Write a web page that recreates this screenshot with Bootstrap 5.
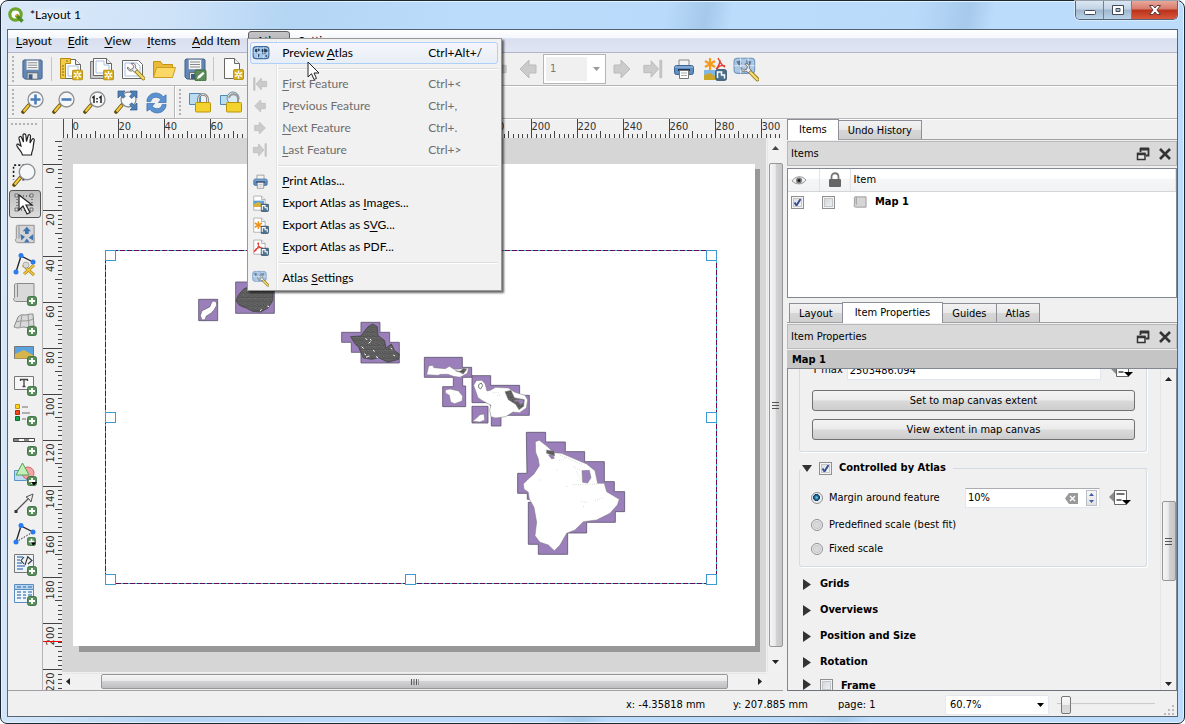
<!DOCTYPE html>
<html lang="en">
<head>
<meta charset="utf-8">
<meta name="viewport" content="width=device-width, initial-scale=1">
<title>*Layout 1</title>
<link rel="stylesheet" href="https://cdn.jsdelivr.net/npm/bootstrap@5.3.0/dist/css/bootstrap.min.css">
<style>
:root{--ui:"DejaVu Sans Condensed","DejaVu Sans",sans-serif;--menu:Lato,"Open Sans",sans-serif}
body{font:11px/14px var(--ui);color:#000;background:#fff}
button,input,select{font:inherit;color:inherit}
svg{display:block;flex:none}
.win{border:1px solid #1c2733;border-radius:8px 8px 7px 7px;background:linear-gradient(100deg,#d9e8f8 0,#cfe3f8 13%,#b4d5f4 22%,#bcdcfb 36%,#b9dafa 51%,#a5c9ea 54%,#bcdcfb 56%,#badafa 70%,#a6caec 74%,#bcdcfb 76%,#bddcfb 100%);padding:0 6px 6px;box-shadow:inset 0 0 0 1px #e3f2ff}
.titlebar{height:28px;font:12px/16px var(--menu);padding:0 0 0 1px}
.halo{background:radial-gradient(closest-side,#fff9,#fff0);padding:0 6px}
.winbtns{border:1px solid #55667a;border-top:0;border-radius:0 0 5px 5px;overflow:hidden;height:19px;box-shadow:0 0 0 1px #e9f5ff99}
.winbtns button{border:0;padding:0;width:28px;background:linear-gradient(#dbe7f3 0,#c2d3e5 45%,#9fb6cc 50%,#bcd4ea 100%);border-right:1px solid #6d8095}
.winbtns .closer{width:45px;border-right:0;background:linear-gradient(#e9a99c 0,#d7796a 45%,#b8301a 50%,#d9583c 100%)}
.client{border:1px solid #596673;border-top-color:#4f6377;background:#f0f0f0;min-height:0}
.menubar{height:23px;background:linear-gradient(#fff 0,#f5f7fc 35%,#d9dfef 40%,#dfe4f3 90%);border-bottom:1px solid #b2b5c6;font:12px/16px var(--menu)}
.menubar>a,.atlasitem>a{color:#000;text-decoration:none;padding:3px 8px;display:block;white-space:nowrap}
u{text-underline-offset:2px}
.atlasitem>a{background:linear-gradient(#c4c4c6,#a9a9ac);border:1px solid #5e5e62;border-radius:3px 3px 0 0;padding:1px 7px 3px;margin-top:1px}
.tbar{height:33px;border-bottom:1px solid #b5b5b5;background:#f0f0f0}
.tbar+.tbar,main{box-shadow:inset 0 1px 0 #fdfdfd}
.tbar button,.tools button{border:0;background:none;padding:0;display:flex;align-items:center;justify-content:center}
.tbar button{width:31px;height:28px}
.grip{width:3px;height:26px;background:radial-gradient(circle at 1px 1px,#b3b3b3 1px,#fff0 1px) 0 0/3px 4px;margin:0 2px 0 4px}
.griph{width:28px;height:3px;background:radial-gradient(circle at 1px 1px,#b3b3b3 1px,#fff0 1px) 0 0/4px 3px;margin:4px 0 3px}
.vsep{width:1px;height:24px;background:#c6c6c6;margin:0 3px}
.grpA{width:473px}
.grpZ{width:167px;border-right:1px solid #b5b5b5;box-shadow:1px 0 0 #fff}
.pagecombo{width:63px;height:30px;border:1px solid #b5b5b5;background:#fff;padding:2px}
.pagecombo select{appearance:none;border:0;width:57px;height:24px;color:#777;padding:0 4px;opacity:1;background:url("data:image/svg+xml,%3Csvg xmlns='http://www.w3.org/2000/svg' width='7' height='4'%3E%3Cpath d='M0 0h7L3.500 4z' fill='%23999'/%3E%3C/svg%3E") no-repeat right 3px center,linear-gradient(90deg,#f0f0f0 41px,#fff 41px)}
.tools{width:35px;border-right:1px solid #b5b5b5;border-bottom:1px solid #a0a0a4;padding-right:1px}
.tools button{width:32px;height:30px;flex:none}
.tools .on{border:1px solid #555;border-radius:3px;background:linear-gradient(#bdbdbd,#dcdcdc);height:28px;margin:1px 0}
.stage{display:grid;grid-template-columns:19px minmax(0,1fr) 17px;grid-template-rows:19px minmax(0,1fr) 18px;min-width:0;border-bottom:1px solid #a0a0a4}
.rulertop{grid-column:1/4;overflow:hidden;position:relative}
.rulerleft{grid-row:2/4;overflow:hidden;position:relative}
.rulertop svg,.rulerleft svg,.scene svg{position:absolute;left:0;top:0}
.rulertop svg{width:100%;height:19px}
.rulerleft svg{width:19px;height:100%}
.stage text{font:11px var(--ui);fill:#333}
.scene{background:#d6d6d6;position:relative;overflow:hidden}
.sbv{width:16px;margin-left:1px;background:#f1f1f1;border-left:1px solid #e6e6e6;align-items:center}
.sbh{height:16px;margin-top:1px;background:#f1f1f1;border-top:1px solid #e6e6e6}
.thumb{border:1px solid #979797;border-radius:2px;display:flex;align-items:center;justify-content:center}
.sbv .thumb{width:14px;background:linear-gradient(90deg,#f5f5f5,#e9e9e9 45%,#d2d2d4 50%,#c6c6c9)}
.sbv .tall{margin:13px 0}
.sbh .thumb{background:linear-gradient(#f5f5f5,#e9e9e9 45%,#d2d2d4 50%,#bebec0);margin:0 30px 0 31px}
.dockcol{width:390px}
.tabrow{height:21px;border-bottom:1px solid #a0a0a4}
.tabrow2{margin-top:4px;padding-left:2px}
.tabrow button{border:1px solid #8c8e98;border-bottom:0;border-right-width:0;background:linear-gradient(#f2f2f2 0,#e9e9e9 48%,#d6d6d6 52%,#cfcfcf);height:19px;padding:2px 9px 0;align-self:flex-end;line-height:16px;white-space:nowrap}
.tabrow button:last-child{border-right-width:1px}
.tabrow .active{background:#fff;height:21px;margin-bottom:-1px;padding:0 12px;border-right-width:1px}
.tabrow:first-child .active{padding:0 11px}
.tabrow .active+button{border-left:0}
.dockhead{height:25px;border:1px solid #b9b9b9;background:#d9d9d9;padding:1px 4px 0 3px;margin-top:1px}
.dockhead button{border:0;background:none;padding:0}
.tree{border:1px solid #828790;background:#fff;height:130px;margin-top:2px}
.tree table{width:100%;border-collapse:collapse;table-layout:fixed}
.tree th{height:22px;font-weight:400;background:linear-gradient(#fff 0,#fff 42%,#f5f6f8 46%,#f1f2f4);border-bottom:1px solid #d5d5d5;border-right:1px solid #e2e3e5;padding:1px 3px 0}
.tree td{height:22px;padding:0 3px}
.tree .vis{width:31px}
.ck{appearance:none;width:13px;height:13px;border:1px solid #8e8f8f;background:linear-gradient(135deg,#cdd1d6,#f6f6f6);box-shadow:inset 0 0 0 1px #f4f4f4,inset 0 0 0 2px #c3c7cc;margin:0;display:block;flex:none}
.ck:checked{background:url("data:image/svg+xml,%3Csvg xmlns='http://www.w3.org/2000/svg' viewBox='0 0 11 11'%3E%3Cpath d='M2.500 5.500L4.500 8.500L8.500 2' fill='none' stroke='%23394f8f' stroke-width='2'/%3E%3C/svg%3E") center/11px,linear-gradient(135deg,#d5d9e0,#fafafa)}
.rd{appearance:none;width:12px;height:12px;border:1px solid #8e8f8f;border-radius:50%;background:radial-gradient(circle,#d9d9d9 40%,#fff 60%);box-shadow:inset 0 0 0 1px #f4f4f4,inset 0 0 0 2px #c3c7cc;margin:0 6px 0 0;flex:none}
.rd:checked{background:radial-gradient(circle at 45% 45%,#7fd0f0 0,#1b6a9c 25%,#123a5c 42%,#eee 48%);box-shadow:none}
.itemhead{height:18px;background:#c5c5c5;font-weight:700;line-height:18px;padding:1px 0 0 5px;margin-top:1px}
.props{border:1px solid #828790;border-bottom-color:#6f737c;min-height:0}
.propbody{overflow:hidden;padding:0 12px 0 11px}
.gbox{border:1px solid #d3dce5;border-radius:3px;box-shadow:1px 1px 0 #fff}
.gextent{border-top:0;padding:0 11px 0 12px;margin-top:-9px;height:92px;gap:8px}
.extrow{margin-bottom:2px}
.inp{border:1px solid #e2e6ee;border-top-color:#abadb3;background:#fff;padding:0 2px;height:20px;min-width:0}
.inp input{min-width:0}
.wide{height:21px;border:1px solid #707070;border-radius:3px;background:linear-gradient(#f3f3f3 0,#ebebeb 48%,#dadada 52%,#cdcdcd);padding:0;line-height:17px}
.gtitle{height:16px;gap:7px;position:relative;z-index:1;padding-left:3px}
.gtitle .rule{height:1px;background:#d3dce5}
.gatlas{border-top:0;height:98px;margin-top:-7px;padding:19px 14px 0 11px;display:flex;flex-direction:column;gap:10px}
.fold{height:26px;padding-left:4px;gap:9px}
.folds{margin-top:4px}
.spin{width:135px}
.spinbtns{width:14px;height:16px;border:1px solid #b9bec9;background:linear-gradient(#f6f6f6,#e2e2e2)}
.spinbtns button{border:0;padding:0;background:none;height:7px;display:flex;justify-content:center;align-items:center}
.status{height:25px;padding:2px 2px 0 0}
.status .sx{width:107px}.status .sy{width:105px}.status .sp{width:107px}
.zoomsel{appearance:none;width:104px;height:20px;border:1px solid #e3e9ef;padding:0 4px;border-radius:2px;background:#fff url("data:image/svg+xml,%3Csvg xmlns='http://www.w3.org/2000/svg' width='7' height='4'%3E%3Cpath d='M0 0h7L3.500 4z'/%3E%3C/svg%3E") no-repeat right 4px center}
.zslide{appearance:none;width:98px;height:20px;background:linear-gradient(#b9b9b9,#fff) no-repeat 0 8px/100% 2px;margin:0}
.zslide::-webkit-slider-thumb{appearance:none;width:10px;height:18px;border:1px solid #777;border-radius:2px;background:linear-gradient(#fafafa 0,#eee 50%,#d5d5d5 52%,#ddd)}
.atlasmenu{display:block;position:absolute;top:8px;left:-1px;z-index:1000;width:255px;min-width:0;border:1px solid #979797;border-radius:0;background:linear-gradient(90deg,#f1f1f1 28px,#e2e3e3 28px,#e2e3e3 29px,#fff 29px,#fff 30px,#f1f1f1 30px);padding:3px 3px 1px 2px;box-shadow:2px 2px 2px #0009;font:12px/16px var(--menu);margin:0;color:#000}
.atlasmenu button{display:grid;grid-template-columns:31px 146px 1fr;width:100%;height:22px;align-items:center;border:1px solid #fff0;background:none;padding:0;text-align:left;border-radius:3px;white-space:nowrap}
.atlasmenu svg{margin-left:1px}
.atlasmenu button:disabled{color:#6d6d6d}
.atlasmenu .hot{border-color:#aecff7;background:linear-gradient(#f4f6fa,#e8eef6)}
.atlasmenu hr{margin:4px 0 3px 28px;border:0;height:2px;background:linear-gradient(#dcdcdc 50%,#fff 50%);opacity:1}
.pointer{position:absolute;left:59px;top:31px;z-index:1001}
</style>
</head>
<body>
<svg width="0" height="0" class="position-absolute" aria-hidden="true">
<defs>
<symbol id="floppy" viewBox="0 0 24 24"><path d="M3 2h18l1 1v18l-1 1H4l-2-2V3z" fill="#6387b5" stroke="#41618c"/><path d="M5.500 2.500h13v10h-13z" fill="#f4f6f8" stroke="#7c8a9c" stroke-width=".6"/><path d="M7 5h10M7 7.500h10M7 10h10" stroke="#888"/><path d="M6.500 15.500h11v6.500h-11z" fill="#e4e4e4" stroke="#555" stroke-width=".7"/><path d="M8 17h4v5H8z" fill="#3d5c86"/></symbol>
<symbol id="star" viewBox="0 0 12 12"><rect x=".5" y=".5" width="11" height="11" rx="1.500" fill="#d8ae1e" stroke="#b28d12"/><path d="M6 1.500v9M2 3.700l8 4.600M10 3.700L2 8.300" stroke="#fff" stroke-width="1.500"/><circle cx="6" cy="6" r="1.200" fill="#d8ae1e"/></symbol>
<symbol id="newlay" viewBox="0 0 24 24"><path d="M5.500 2.500h11l5 5v14h-16z" fill="#fff" stroke="#666"/><path d="M16.500 2.500v5h5" fill="#eee" stroke="#666"/><path d="M1.500 1.500h10v5h-5v15h-5z" fill="#f2cb4a" stroke="#b48a12"/><path d="M3 9h2M3 12h2M3 15h2M3 18h2M8 3v2" stroke="#8a6a10"/><path d="M9 9h10v10H9z" fill="none" stroke="#a8c0e0"/><use href="#star" x="13" y="12.500" width="11" height="11"/></symbol>
<symbol id="duplay" viewBox="0 0 24 24"><path d="M.5 4.500h16v17H.5z" fill="#c9c9c9" stroke="#777"/><path d="M3.500 1.500h13l5 5v12h-18z" fill="#fff" stroke="#666"/><path d="M16.500 1.500v5h5" fill="#eee" stroke="#666"/><path d="M6 4h8v4h5v8H6z" fill="none" stroke="#a8c0e0"/><use href="#star" x="13" y="12.500" width="11" height="11"/></symbol>
<symbol id="wrenchhead" viewBox="0 0 24 24"><path d="M12 12l9 9" stroke="#8a7316" stroke-width="4.500" stroke-linecap="round"/><path d="M12.500 12.500L21 21" stroke="#f2d76a" stroke-width="2.800" stroke-linecap="round"/><path d="M3 8c-1 3 3 6 6 4l2 2 3-3-2-2c1-4-2-6-5-5l3 3-1 3-3 1z" fill="#eee" stroke="#555" stroke-width=".9"/></symbol>
<symbol id="manager" viewBox="0 0 24 24"><path d="M1.500 3.500h16l4 4v14h-20z" fill="#fff" stroke="#666"/><path d="M4 6h12l3 3v10H4z" fill="none" stroke="#a8c0e0"/><use href="#wrenchhead" x="4" y="3" width="21" height="21"/></symbol>
<symbol id="folder" viewBox="0 0 24 24"><path d="M1.500 20.500v-16h7l2 3h10v3" fill="#e9b93a" stroke="#c79212"/><path d="M1.500 20.500l3-10h19l-3 10z" fill="#fbd766" stroke="#cf9d1e"/></symbol>
<symbol id="savetpl" viewBox="0 0 24 24"><use href="#floppy"/><rect x="12" y="13" width="11" height="11" rx="1.500" fill="#5c8d58" stroke="#3f6d3d"/><path d="M14 22l1-3 5-4 1.500 1.500-4.500 4.500z" fill="#fff"/></symbol>
<symbol id="addpage" viewBox="0 0 24 24"><path d="M3.500 1.500h10l5 5v15h-15z" fill="#fff" stroke="#666"/><path d="M13.500 1.500v5h5" fill="#eee" stroke="#666"/><use href="#star" x="12" y="12" width="11" height="11"/></symbol>
<symbol id="lens" viewBox="0 0 24 24"><path d="M8 15l-6 7" stroke="#5d4b0c" stroke-width="3.600" stroke-linecap="round"/><path d="M8 15l-5.500 6.500" stroke="#f5c93c" stroke-width="2.200"/><circle cx="14.500" cy="9.500" r="7.500" fill="#f5f7f8" stroke="#8b8f92" stroke-width="1.300"/></symbol>
<symbol id="zin" viewBox="0 0 24 24"><use href="#lens"/><path d="M14.500 4.500v10M9.500 9.500h10" stroke="#4b7db8" stroke-width="2.600"/></symbol>
<symbol id="zout" viewBox="0 0 24 24"><use href="#lens"/><path d="M9.500 9.500h10" stroke="#4b7db8" stroke-width="2.600"/></symbol>
<symbol id="zone" viewBox="0 0 24 24"><use href="#lens"/><path d="M9.300 7.800l1.700-1.300v6.500M16.300 7.800L18 6.500V13" fill="none" stroke="#222" stroke-width="1.500"/><path d="M14 8v1.500M14 11v1.500" stroke="#222" stroke-width="1.500"/></symbol>
<symbol id="zfull" viewBox="0 0 24 24"><use href="#lens"/><path d="M4 1h7L8.800 3.200l2.500 3-2 2-3-2.600L4 8zM23 1v7l-2.400-2.200-3 2.600-2-2 2.600-3L16 1zM23 20h-7l2.200-2.200-2.600-3 2-2 3 2.600L23 13z" fill="#4f7fb7" stroke="#2f5a8c" stroke-width=".7"/></symbol>
<symbol id="refresh" viewBox="0 0 24 24"><path d="M2 11c0-9 12-12 17-5l3-2v8h-8l2.500-3C13 5 7 6 6 11z" fill="#5b92cf" stroke="#356ba8" stroke-width=".7"/><path d="M22 14c0 9-12 12-17 5l-3 2v-8h8l-2.500 3c3.500 4 9.500 3 10.500-2z" fill="#5b92cf" stroke="#356ba8" stroke-width=".7"/></symbol>
<symbol id="padlock" viewBox="0 0 24 24"><path d="M10.500 13V9c0-6 9-6 9 0v4" fill="none" stroke="#777" stroke-width="2.600"/><path d="M10.500 13V9c0-6 9-6 9 0v4" fill="none" stroke="#ddd" stroke-width="1"/><rect x="7.500" y="12.500" width="15" height="9.500" rx="1" fill="#f3d22e" stroke="#b8940c"/></symbol>
<symbol id="lockit" viewBox="0 0 24 24"><path d="M1.500 3.500h11v11h-11z" fill="#b9dcf2" stroke="#4e89b5"/><use href="#padlock"/></symbol>
<symbol id="unlockit" viewBox="0 0 24 24"><path d="M1.500 5.500h14v9h-14z" fill="#b9dcf2" stroke="#4e89b5"/><circle cx="14" cy="8" r="6" fill="#d9ecf6" stroke="#7a8a96"/><path d="M10 8c1-5 8-5 9 0v5" fill="none" stroke="#999" stroke-width="2"/><rect x="7.500" y="12.500" width="15" height="9.500" rx="1" fill="#f3d22e" stroke="#b8940c"/></symbol>
<symbol id="arrl" viewBox="0 0 24 24"><path d="M4 12l9-9v5h7v8h-7v5z" fill="#cbcbcb" stroke="#bababa"/></symbol>
<symbol id="arrr" viewBox="0 0 24 24"><path d="M20 12l-9-9v5H4v8h7v5z" fill="#cbcbcb" stroke="#bababa"/></symbol>
<symbol id="arrfirst" viewBox="0 0 24 24"><path d="M6 12l8-9v5h8v8h-8v5zM2.500 2.500h2v19h-2z" fill="#cbcbcb" stroke="#bababa"/></symbol>
<symbol id="arrlast" viewBox="0 0 24 24"><path d="M18 12l-8-9v5H2v8h8v5zM19.500 2.500h2v19h-2z" fill="#cbcbcb" stroke="#bababa"/></symbol>
<symbol id="printer" viewBox="0 0 24 24"><path d="M7 9V3h10v6" fill="#f3f3f3" stroke="#888"/><rect x="2.500" y="8.500" width="19" height="9" rx="2" fill="#5e8dc0" stroke="#3c6494"/><path d="M3 10h18" stroke="#9dbfe2"/><path d="M6 13h12" stroke="#1f3350" stroke-width="2"/><path d="M7.500 13.500h9v8h-9z" fill="#fff" stroke="#777"/><path d="M9 16h6M9 18.500h6" stroke="#aaa"/></symbol>
<symbol id="disk" viewBox="0 0 12 12"><rect x=".7" y=".7" width="10.600" height="10.600" rx="1.500" fill="#4d7391" stroke="#2f4c63"/><path d="M2.500 9V3h4v3h3v3.500" fill="none" stroke="#fff" stroke-width="1.500"/></symbol>
<symbol id="export" viewBox="0 0 24 24"><path d="M7 1v12M2 4l10 6M12 4L2 10" stroke="#f59a1e" stroke-width="2.200"/><path d="M15 1c2 4 4 8 7 9M14 12c2-4 6-4 8-3M17 3c0 4-2 7-4 9" fill="none" stroke="#e23b30" stroke-width="1.400"/><path d="M1 13h11v10H1z" fill="#7fb6e6" /><path d="M1 18l6-2 5 3v4H1z" fill="#caa62a"/><use href="#disk" x="12" y="12" width="12" height="12"/></symbol>
<symbol id="atlasmap" viewBox="0 0 24 24"><rect x="1.500" y="3.500" width="21" height="16" rx="4" fill="#a5c6e8" stroke="#3f6c9c" stroke-width="1.500"/><path d="M4 7l5-1 2 2-3 2-1 3-3-3zM8 13l2 1-1 4-1-1zM13 7l4-1 4 2-1 3-2 1v2l-2-2-1 3-2-4zM18 15h2v2h-2z" fill="#27405e"/><path d="M7.500 4v15M15.500 4v15M2 11.500h20" stroke="#dbe9f7" stroke-width=".8"/></symbol>
<symbol id="atlasset" viewBox="0 0 24 24"><rect x="1" y="2" width="19" height="14" rx="3" fill="#a9c8e8" stroke="#6f94bb"/><path d="M3 5l4-1 1 3-2 3zM12 4l5 1-1 3-3 1z" fill="#5b7898"/><path d="M7 2v14M14 2v14M1 9h19" stroke="#e5eff9" stroke-width=".8"/><use href="#wrenchhead" x="5" y="4" width="20" height="20"/></symbol>
<symbol id="page" viewBox="0 0 24 24"><path d="M2.500 1.500h11l5 5v15h-16z" fill="#fff" stroke="#999"/><path d="M13.500 1.500v5h5" fill="#eee" stroke="#999"/></symbol>
<symbol id="eximg" viewBox="0 0 24 24"><use href="#page"/><path d="M2 8h15v8H2z" fill="#58a0dc"/><path d="M2 13l7-3 8 4v3H2z" fill="#d6b23c"/><use href="#disk" x="12" y="12" width="12" height="12"/></symbol>
<symbol id="exsvg" viewBox="0 0 24 24"><use href="#page"/><path d="M9 6v11M4 8.500l10 6M14 8.500l-10 6" stroke="#f0931a" stroke-width="2.200"/><use href="#disk" x="12" y="12" width="12" height="12"/></symbol>
<symbol id="expdf" viewBox="0 0 24 24"><use href="#page"/><path d="M8 5c1 5 3 8 8 9M3 18c3-6 8-7 12-5M9 5c1 5-2 10-6 13" fill="none" stroke="#dd3a2e" stroke-width="1.600"/><use href="#disk" x="12" y="12" width="12" height="12"/></symbol>
<symbol id="hand" viewBox="0 0 24 24"><path d="M9.500 23c-1-4-3.500-5-5.500-9-.8-2 1-2.600 2.300-1L8 14 6 6.500c-.5-2.300 2-2.800 2.700-.8L10.500 10 10 3.500c0-2.300 2.600-2.300 2.900 0l.6 6L15 4c.5-2 2.800-1.600 2.500.6L17 11l2-3.500c1-1.500 2.600-.8 2.200 1-.9 4-.8 5.500-1.300 8.500-.4 2-1.400 3-1.400 6z" fill="#fff" stroke="#222" stroke-width="1.200"/></symbol>
<symbol id="zrect" viewBox="0 0 24 24"><path d="M12 3H1.500v14M12 17H4" fill="none" stroke="#222" stroke-width="1.500" stroke-dasharray="2 2"/><use href="#lens"/></symbol>
<symbol id="select" viewBox="0 0 24 24"><path d="M4 4h15v14H4z" fill="none" stroke="#333" stroke-dasharray="1 2"/><path d="M2 2h3v3H2zM17 2h3v3h-3zM2 16h3v3H2zM17 16h3v3h-3z" fill="#ddd" stroke="#555" stroke-width=".8"/><path d="M6 3v15l4-4 4 8 3-1.500-4-7.500h6z" fill="#fff" stroke="#222" stroke-width="1.200"/></symbol>
<symbol id="movec" viewBox="0 0 24 24"><path d="M5 2.500h17v19H5c-4 0-4-4-2.500-4.500V4c0-2 2.500-2 3 0v13" fill="#d5d5d5" stroke="#8a8a8a"/><path d="M14 4l4.500 5H16v3h-4V9H9.500zM7 12l5 3-4 4zM21 12v7l-5-3zM11 21l3-4 3 4z" fill="#3f74b0"/></symbol>
<symbol id="nodes" viewBox="0 0 24 24"><path d="M3 20L8 4l12 6" fill="none" stroke="#222" stroke-width="1.300"/><path d="M10 13l11 10M21 13L11 22" stroke="#a9820c" stroke-width="3"/><path d="M10 13l11 10M21 13L11 22" stroke="#f3cc4a" stroke-width="1.600"/><circle cx="13" cy="13" r="3" fill="#d9d9d9" stroke="#888" stroke-width=".6"/><circle cx="3" cy="20" r="2.500" fill="#2a7af0"/><circle cx="8" cy="3.500" r="2.500" fill="#2a7af0"/><circle cx="20" cy="10" r="2.500" fill="#2a7af0"/></symbol>
<symbol id="plus" viewBox="0 0 10 10"><rect x=".5" y=".5" width="9" height="9" rx="2" fill="#5a8f5c" stroke="#44744a"/><path d="M5 2v6M2 5h6" stroke="#fff" stroke-width="1.800"/></symbol>
<symbol id="plusd" viewBox="0 0 10 10"><use href="#plus"/><path d="M4 6h6L7 9.500z"/></symbol>
<symbol id="amap" viewBox="0 0 24 24"><path d="M4 1.500h17v18H4c-4 0-4-3-2.500-4V3c0-2 2.500-2 3 0v12" fill="#d9d9d9" stroke="#8a8a8a"/><use href="#plus" x="14" y="14" width="10" height="10"/></symbol>
<symbol id="a3d" viewBox="0 0 24 24"><path d="M1 15L5 5c3-3 5-2 8-2 3-1 5-1 7-1l1 12c-4-1-5 3-10 1-3 0-6 2-10 0z" fill="#d9d9d9" stroke="#8a8a8a"/><path d="M3 10c5-2 12 0 17-3M9 3L7 15M15 2l1 13" fill="none" stroke="#999"/><use href="#plus" x="14" y="14" width="10" height="10"/></symbol>
<symbol id="apic" viewBox="0 0 24 24"><path d="M1.500 4.500h19v12h-19z" fill="#5aa3e0" stroke="#777"/><path d="M2 12l9-4 9 5v3.500H2z" fill="#d6b64c"/><use href="#plus" x="14" y="14" width="10" height="10"/></symbol>
<symbol id="alab" viewBox="0 0 24 24"><path d="M1.500 4.500h19v13h-19z" fill="#f7f7f7" stroke="#777"/><path d="M7.500 9V7.500h7V9M11 7.500v7M9.500 14.500h3" fill="none" stroke="#444" stroke-width="1.300"/><use href="#plus" x="14" y="14" width="10" height="10"/></symbol>
<symbol id="aleg" viewBox="0 0 24 24"><path d="M2.500 2.500h4v4h-4z" fill="#ffd21c" stroke="#c79212"/><path d="M2.500 8.500h4v4h-4z" fill="#f0481c" stroke="#a82d0c"/><path d="M2.500 14.500h4v4h-4z" fill="#17a34a" stroke="#0d6b30"/><path d="M9 5h6M9 11h8M9 17h4" stroke="#999" stroke-width="1.600"/><use href="#plus" x="14" y="14" width="10" height="10"/></symbol>
<symbol id="ascale" viewBox="0 0 24 24"><path d="M.5 6.500h21v3H.5z" fill="#fff" stroke="#444"/><path d="M1 8h5M11 8h5" stroke="#888" stroke-width="2"/><use href="#plus" x="14" y="14" width="10" height="10"/></symbol>
<symbol id="ashape" viewBox="0 0 24 24"><path d="M1.500 8.500h12v10h-12z" fill="#bfdcf3" stroke="#5b95c4"/><circle cx="15" cy="11" r="6" fill="#f5a3a3" stroke="#d16b6b"/><path d="M9.500 1L16 13H3z" fill="#c4efb8" stroke="#4fa25a"/><use href="#plusd" x="14" y="14" width="10" height="10"/></symbol>
<symbol id="aarrow" viewBox="0 0 24 24"><path d="M3 19L17 5" stroke="#555" stroke-width="1.300"/><path d="M1.500 18h3v3h-3z" fill="#333"/><path d="M20 2l-2 8-2-3-3-2z" fill="#eee" stroke="#555"/><use href="#plus" x="14" y="14" width="10" height="10"/></symbol>
<symbol id="anode" viewBox="0 0 24 24"><path d="M3 20L8 4l12 6" fill="none" stroke="#222" stroke-width="1.300"/><path d="M3 20L20 10" stroke="#222" stroke-dasharray="1.500 1.500"/><circle cx="3" cy="20" r="2.500" fill="#2a7af0"/><circle cx="8" cy="3.500" r="2.500" fill="#2a7af0"/><circle cx="20" cy="10" r="2.500" fill="#2a7af0"/><use href="#plusd" x="14" y="15" width="9" height="9"/></symbol>
<symbol id="ahtml" viewBox="0 0 24 24"><path d="M1.500 2.500h19v18h-19z" fill="#eef3f8" stroke="#777"/><path d="M4 5h6M4 8h3M4 11h5M4 14h8M4 17h6" stroke="#5b8cc0" stroke-width="1.500"/><path d="M11 5L8 8.500l3 3.500M15 4l-3 9M15 5l4 3.500-4 3.500" fill="none" stroke="#333" stroke-width="1.100"/><use href="#plus" x="14" y="14" width="10" height="10"/></symbol>
<symbol id="atable" viewBox="0 0 24 24"><path d="M1.500 2.500h19v18h-19z" fill="#eef5fb" stroke="#5b8cc0"/><path d="M2 3h18v4H2z" fill="#b4d3ee"/><path d="M4 10h4M10 10h3M15 10h4M4 13h4M10 13h3M15 13h4M4 16h4M10 16h3M4 5h4M10 5h3M15 5h4" stroke="#5b8cc0" stroke-width="1.300"/><path d="M1.500 7.500h19" stroke="#5b8cc0"/><use href="#plus" x="14" y="14" width="10" height="10"/></symbol>
<symbol id="ddef" viewBox="0 0 24 18"><path d="M1 8l7-7v14z" fill="#8a8a8a"/><path d="M6.500 1.500h12v14h-12z" fill="#fff" stroke="#666"/><path d="M8.500 5h8M8.500 11h5" stroke="#444" stroke-width="1.300"/><path d="M14 11h9l-4.500 4.500z"/></symbol>
<symbol id="dfloat" viewBox="0 0 14 14"><path d="M4.500 5V2h8v6.500H10" fill="none" stroke="#333" stroke-width="1.800"/><path d="M4 2h9" stroke="#333" stroke-width="3"/><path d="M1.500 6.500H9V12.500H1.500z" fill="#e6e6e6" stroke="#333" stroke-width="1.500"/><path d="M1 7h8.500" stroke="#333" stroke-width="2.500"/></symbol>
<symbol id="dx" viewBox="0 0 14 14"><path d="M2 2l10 10M12 2L2 12" stroke="#333" stroke-width="2.600"/></symbol>
<symbol id="tri" viewBox="0 0 8 11"><path d="M0 0v11l8-5.500z" fill="#333"/></symbol>
<pattern id="lava" width="17" height="13" patternUnits="userSpaceOnUse"><rect width="17" height="13" fill="#626262"/><path d="M0 2l3 2 2-3 3 5 4-4 5 3M1 11l3-4 3 4 4-2 2 3 4-4" fill="none" stroke="#424242" stroke-width="2"/><path d="M2 6l3 1M9 1l2 2M7 8h3M14 9l2 1M4 11l1 1" stroke="#9a9a9a" stroke-width="1.800"/></pattern>
</defs>
</svg>

<div class="win vh-100 d-flex flex-column">
  <header class="titlebar d-flex align-items-center flex-shrink-0">
    <svg width="16" height="16" viewBox="0 0 16 16" aria-hidden="true"><circle cx="7.500" cy="7.500" r="5.700" fill="#fff" stroke="#6da52c" stroke-width="3.200"/><path d="M8 8l6.500 6.500" stroke="#4f8a1e" stroke-width="3.500"/><path d="M7.500 7.500h3l-3 3z" fill="#f2a01f"/></svg>
    <span class="halo">*Layout 1</span>
    <div class="winbtns d-flex ms-auto align-self-start">
      <button aria-label="Minimize"><svg class="m-auto" width="14" height="12" viewBox="0 0 14 12"><rect x="1.500" y="6.500" width="11" height="4" rx="1" fill="#fff" stroke="#444b58"/></svg></button>
      <button aria-label="Maximize"><svg class="m-auto" width="14" height="12" viewBox="0 0 14 12"><path d="M1.500 1.500h11v9h-11zM5 4.500v3h4v-3z" fill="#fff" fill-rule="evenodd" stroke="#444b58"/></svg></button>
      <button class="closer" aria-label="Close"><svg class="m-auto" width="14" height="12" viewBox="0 0 14 12"><path d="M1.500 1.500h3.500l2 2.500 2-2.500h3.500L9 6l3.500 4.500H9L7 8l-2 2.500H1.500L5 6z" fill="#fff" stroke="#5a3a3a"/></svg></button>
    </div>
  </header>

  <div class="client d-flex flex-column flex-grow-1">
    <nav class="menubar d-flex position-relative flex-shrink-0">
      <a href="#"><u>L</u>ayout</a><a href="#"><u>E</u>dit</a><a href="#"><u>V</u>iew</a><a href="#"><u>I</u>tems</a><a href="#"><u>A</u>dd Item</a>
      <div class="atlasitem position-relative"><a href="#">Atlas</a>
        <div class="dropdown-menu show atlasmenu">
          <button class="hot"><svg width="18" height="18"><use href="#atlasmap"/></svg><span>Preview <u>A</u>tlas</span><span>Ctrl+Alt+/</span></button>
          <hr>
          <button disabled><svg width="16" height="16"><use href="#arrfirst"/></svg><span><u>F</u>irst Feature</span><span>Ctrl+&lt;</span></button>
          <button disabled><svg width="16" height="16"><use href="#arrl"/></svg><span>P<u>r</u>evious Feature</span><span>Ctrl+,</span></button>
          <button disabled><svg width="16" height="16"><use href="#arrr"/></svg><span><u>N</u>ext Feature</span><span>Ctrl+.</span></button>
          <button disabled><svg width="16" height="16"><use href="#arrlast"/></svg><span><u>L</u>ast Feature</span><span>Ctrl+&gt;</span></button>
          <hr>
          <button><svg width="17" height="17"><use href="#printer"/></svg><span><u>P</u>rint Atlas...</span></button>
          <button><svg width="17" height="17"><use href="#eximg"/></svg><span>Export Atlas as <u>I</u>mages...</span></button>
          <button><svg width="17" height="17"><use href="#exsvg"/></svg><span>Export Atlas as S<u>V</u>G...</span></button>
          <button><svg width="17" height="17"><use href="#expdf"/></svg><span><u>E</u>xport Atlas as PDF...</span></button>
          <hr>
          <button><svg width="17" height="17"><use href="#atlasset"/></svg><span>Atlas <u>S</u>ettings</span></button>
        </div>
        <svg class="pointer" width="13" height="20" viewBox="0 0 13 20" aria-hidden="true"><path d="M1 1v15l3.500-3.300L7 18.500l2.500-1.100L7 12h5z" fill="#fff" stroke="#222"/></svg>
      </div>
      <a href="#"><u>S</u>ettings</a>
    </nav>

    <div class="tbar d-flex align-items-center flex-shrink-0" role="toolbar" aria-label="Layout">
      <div class="grpA d-flex align-items-center">
        <span class="grip"></span>
        <button aria-label="Save Project"><svg width="23" height="23"><use href="#floppy"/></svg></button><span class="vsep"></span>
        <button aria-label="New Layout"><svg width="24" height="24"><use href="#newlay"/></svg></button>
        <button aria-label="Duplicate Layout"><svg width="24" height="24"><use href="#duplay"/></svg></button>
        <button aria-label="Layout Manager"><svg width="24" height="24"><use href="#manager"/></svg></button>
        <button aria-label="Add from Template"><svg width="24" height="24"><use href="#folder"/></svg></button>
        <button aria-label="Save as Template"><svg width="24" height="24"><use href="#savetpl"/></svg></button><span class="vsep"></span>
        <button aria-label="Add Pages"><svg width="24" height="24"><use href="#addpage"/></svg></button>
      </div>
      <button aria-label="First Feature"><svg width="22" height="22"><use href="#arrfirst"/></svg></button>
      <button aria-label="Previous Feature"><svg width="24" height="24"><use href="#arrl"/></svg></button>
      <div class="pagecombo"><select aria-label="Atlas page" disabled><option>1</option></select></div>
      <button aria-label="Next Feature"><svg width="24" height="24"><use href="#arrr"/></svg></button>
      <button aria-label="Last Feature"><svg width="22" height="22"><use href="#arrlast"/></svg></button>
      <button aria-label="Print Atlas"><svg width="24" height="24"><use href="#printer"/></svg></button>
      <button aria-label="Export Atlas"><svg width="24" height="24"><use href="#export"/></svg></button>
      <button aria-label="Atlas Settings"><svg width="26" height="26"><use href="#atlasset"/></svg></button>
    </div>
    <div class="tbar d-flex align-items-center flex-shrink-0" role="toolbar" aria-label="Navigation">
      <div class="grpZ d-flex align-items-center align-self-stretch">
        <span class="grip"></span>
        <button aria-label="Zoom In"><svg width="24" height="24"><use href="#zin"/></svg></button>
        <button aria-label="Zoom Out"><svg width="24" height="24"><use href="#zout"/></svg></button>
        <button aria-label="Zoom to 100%"><svg width="24" height="24"><use href="#zone"/></svg></button>
        <button aria-label="Zoom Full"><svg width="24" height="24"><use href="#zfull"/></svg></button>
        <button aria-label="Refresh View"><svg width="23" height="23"><use href="#refresh"/></svg></button>
      </div>
      <span class="grip"></span>
      <button aria-label="Lock Selected Items"><svg width="24" height="24"><use href="#lockit"/></svg></button>
      <button aria-label="Unlock All Items"><svg width="24" height="24"><use href="#unlockit"/></svg></button>
    </div>

    <main class="d-flex flex-grow-1 overflow-hidden">
      <div class="tools d-flex flex-column align-items-center flex-shrink-0" role="toolbar" aria-label="Toolbox">
        <span class="griph"></span>
        <button aria-label="Pan Layout"><svg width="24" height="24"><use href="#hand"/></svg></button>
        <button aria-label="Zoom"><svg width="25" height="25"><use href="#zrect"/></svg></button>
        <button class="on" aria-label="Select/Move Item"><svg width="24" height="24"><use href="#select"/></svg></button>
        <button aria-label="Move Item Content"><svg width="22" height="22"><use href="#movec"/></svg></button>
        <button aria-label="Edit Nodes Item"><svg width="24" height="24"><use href="#nodes"/></svg></button>
        <button aria-label="Add Map"><svg width="24" height="24"><use href="#amap"/></svg></button>
        <button aria-label="Add 3D Map"><svg width="24" height="24"><use href="#a3d"/></svg></button>
        <button aria-label="Add Picture"><svg width="24" height="24"><use href="#apic"/></svg></button>
        <button aria-label="Add Label"><svg width="24" height="24"><use href="#alab"/></svg></button>
        <button aria-label="Add Legend"><svg width="24" height="24"><use href="#aleg"/></svg></button>
        <button aria-label="Add Scale Bar"><svg width="24" height="24"><use href="#ascale"/></svg></button>
        <button aria-label="Add Shape"><svg width="24" height="24"><use href="#ashape"/></svg></button>
        <button aria-label="Add Arrow"><svg width="24" height="24"><use href="#aarrow"/></svg></button>
        <button aria-label="Add Node Item"><svg width="24" height="24"><use href="#anode"/></svg></button>
        <button aria-label="Add HTML"><svg width="24" height="24"><use href="#ahtml"/></svg></button>
        <button aria-label="Add Attribute Table"><svg width="24" height="24"><use href="#atable"/></svg></button>
      </div>

      <section class="stage flex-grow-1 me-1">
        <div class="rulertop"><svg id="rt"></svg></div>
        <div class="rulerleft"><svg id="rl"></svg></div>
        <div class="scene">
          <svg width="704" height="534" viewBox="62 138 704 534" role="img" aria-label="Map of Hawaii">
            <path d="M79 169h681v483H79z" fill="#989898"/><path d="M73 164h682v482H73z" fill="#fff"/>
            <g stroke="#5f5570" stroke-width="2.500" fill="#9a7fba">
              <g transform="translate(180 240) scale(.3333)">
                <path d="M56 178h57v64H56zM167 126h116v94H167zM543 247h57v30h29v30h29v62H543v-32h-29v-30h-29v-30h58z"/>
                <path d="M95 187l6-4 8 3 1 10-8 14-9 10-14 8-4 11-9 1-5-13 5-15 13-6 11-6z" fill="#fff" stroke="#444" stroke-width="1.500"/>
                <path d="M168 182l8-18 16-18 30-10 58 6-2 40-14 22-22 12-24-2-20-10-20-8z" fill="url(#lava)" stroke="#444"/>
                <path d="M512 290l30-2 22-28 14-8 14 8 2 26 20 16 4 22 16-12 10 20 14 10-2 16-32 9-28-14-20 5-26-4-14-32-12-12z" fill="url(#lava)" stroke="#444"/>
                <path d="M556 296l6 3M566 310l6-5M545 320l6 6M558 352l10-4M588 350l6 3M632 324l5 4M580 330l3 5M553 341l5 4M240 212l5-3M262 198l5 2M570 298l5 3M640 345l5 3" stroke="#fff" stroke-width="3"/>
              </g>
              <g transform="translate(410 340) scale(.3333)">
                <path d="M43 52h114v30h28v30h-27v26h9v62H98v-60h32v-28H43zM186 107h56v29h87v30h29v60h-85v32h-29v-61h-3v-9h-55zM186 199h48v50h-48zM349 277h58v29h59v29h58v30h59v60h30v30h31v60h-28v32h-86v32h-57v64h-88v-30h-30V487h12l-8-9h-7v-18h-29v-60h28z"/>
                <g fill="#fff" stroke="#777" stroke-width="1.500">
                  <path d="M50 104l6-26 12-2 4 7 34 3 12-7 14 9 20-1 24-3-4 16-22 12-20-3-16-6H92l-8 3zM106 150l14-3 26 6 12 16-2 14-22 8-12-5-4-20-11-6zM191 136l8-14 16-1 10 10 6 22 10-2 16-9 38 2 18 12 18 6 14 4 8 14-4 24-20 14-20-2-22 14-30 4-14-4-4-20 4-14-24-13-15-10zM188 244l14-12 8-8 12-2 2 18-14 6z"/>
                  <path d="M376 305l12-4 22 17 22 20 23 2 35 15 40 17 25 20 8 38h20l7 25 38 23-6 17-22 25-40 20-40 5-25 25-25 10-20 35-17 17-18-17-25-8-15-20 5-40-8-45-14-25-3-20-13-10-2-15 15-15 17-15 16-25-3-20-8-20z"/>
                  <path d="M285 155l18-4 10 22 30 6-2 20-14 10-10-16-22-14zM136 92l14 2 10-8 10 2-10 14-12-6zM410 330l22 4 2 14-24-8z" fill="url(#lava)"/>
                  <path d="M516 392l22-1 5 22-10 16-15-2zM416 346l12-2 5 11-8 2zM314 180l24-2 4 10-10 6-8-10-10 2z" fill="#9a7fba"/>
                  <path d="M206 134l8-5 4 8-6 10-6-4z" stroke-width="3"/>
                </g>
                <path d="M450 345l70 30M490 380l22 12M500 395l18 30M490 434l74-2M515 484l20 4M555 482l24-8M448 362l20-8M440 390h2M470 440h2M390 420h2M520 500h6M250 158h20M262 166l14-2" stroke="#aaa" stroke-width="2" stroke-dasharray="2 5" fill="none"/>
              </g>
            </g>
            <g fill="none" shape-rendering="crispEdges"><path d="M105.500 250.500h611v333h-611z" stroke="#35b6d8"/><path d="M105.500 250.500h611v333h-611z" stroke="#6b0d4c" stroke-dasharray="5 2"/>
            <path d="M105.500 250.500h10v10h-10zM706.500 250.500h10v10h-10zM105.500 412.500h10v10h-10zM706.500 412.500h10v10h-10zM105.500 574.500h10v10h-10zM405.500 574.500h10v10h-10zM706.500 574.500h10v10h-10z" fill="#fff" stroke="#3d9ad1"/></g>
          </svg>
        </div>
        <div class="sbv d-flex flex-column py-2" role="scrollbar" aria-controls="rl" aria-valuenow="50">
          <svg width="7" height="4" viewBox="0 0 7 4"><path d="M0 4h7L3.500 0z" fill="#444"/></svg>
          <div class="thumb tall flex-grow-1"><svg width="7" height="7" viewBox="0 0 7 7"><path d="M0 .5h7M0 3.500h7M0 6.500h7" stroke="#555"/></svg></div>
          <svg width="7" height="4" viewBox="0 0 7 4"><path d="M0 0h7L3.500 4z" fill="#222"/></svg>
        </div>
        <div class="sbh d-flex align-items-center px-1" role="scrollbar" aria-controls="rt" aria-orientation="horizontal" aria-valuenow="50">
          <svg width="4" height="7" viewBox="0 0 4 7"><path d="M4 0v7L0 3.500z" fill="#222"/></svg>
          <div class="thumb flex-grow-1 align-self-stretch"><svg width="8" height="6" viewBox="0 0 8 6"><path d="M.5 0v6M3 0v6M5.500 0v6M8 0v6" stroke="#555"/></svg></div>
          <svg width="4" height="7" viewBox="0 0 4 7"><path d="M0 0v7l4-3.500z" fill="#222"/></svg>
        </div>
      </section>

      <aside class="dockcol d-flex flex-column flex-shrink-0">
        <div class="tabrow d-flex flex-shrink-0" role="tablist"><button class="active" role="tab">Items</button><button role="tab">Undo History</button></div>
        <div class="dockhead d-flex align-items-center flex-shrink-0 gap-2"><span class="flex-grow-1">Items</span><button aria-label="Float"><svg width="14" height="14"><use href="#dfloat"/></svg></button><button aria-label="Close panel"><svg width="14" height="14"><use href="#dx"/></svg></button></div>
        <div class="tree flex-shrink-0">
          <table>
            <thead><tr>
              <th class="vis"><svg width="16" height="12" viewBox="0 0 16 12"><path d="M1 7c3-5 10-6 14-1-3 5-10 5-14 1z" fill="#eee" stroke="#999"/><circle cx="8" cy="6.500" r="3" fill="#777"/><circle cx="8" cy="6.500" r="1.300" fill="#111"/></svg></th>
              <th class="vis"><svg class="mx-auto" width="14" height="16" viewBox="0 0 14 16"><path d="M3.500 8V5c0-5 7-5 7 0v3" fill="none" stroke="#777" stroke-width="1.800"/><rect x="1" y="7" width="12" height="8" rx="1" fill="#666"/></svg></th>
              <th>Item</th></tr></thead>
            <tbody><tr><td><input class="ck" type="checkbox" checked aria-label="Visible"></td><td><input class="ck" type="checkbox" aria-label="Locked"></td>
              <td><span class="d-flex align-items-center gap-2"><svg width="14" height="14" viewBox="0 0 15 14"><path d="M3 1.500h11v11H3c-2.500 0-2-2-1.500-2.500V2c.5-1 2-1 2 0v8" fill="#d5d5d5" stroke="#999"/></svg><b>Map 1</b></span></td></tr></tbody>
          </table>
        </div>
        <div class="tabrow tabrow2 d-flex flex-shrink-0" role="tablist"><button role="tab">Layout</button><button class="active" role="tab">Item Properties</button><button role="tab">Guides</button><button role="tab">Atlas</button></div>
        <div class="dockhead d-flex align-items-center flex-shrink-0 gap-2"><span class="flex-grow-1">Item Properties</span><button aria-label="Float"><svg width="14" height="14"><use href="#dfloat"/></svg></button><button aria-label="Close panel"><svg width="14" height="14"><use href="#dx"/></svg></button></div>
        <div class="itemhead flex-shrink-0">Map 1</div>
        <div class="props d-flex flex-grow-1">
          <div class="propbody flex-grow-1">
            <div class="gbox gextent d-flex flex-column">
              <div class="extrow d-flex align-items-center"><label for="ymax" class="me-1">Y max</label><input id="ymax" class="inp flex-grow-1" value="2503486.094"><svg class="ms-2" width="26" height="18"><use href="#ddef"/></svg></div>
              <button class="wide flex-shrink-0">Set to map canvas extent</button>
              <button class="wide flex-shrink-0">View extent in map canvas</button>
            </div>
            <div class="gtitle d-flex align-items-center mt-2"><svg width="10" height="7" viewBox="0 0 10 7"><path d="M0 0h10L5 7z" fill="#333"/></svg><input class="ck" type="checkbox" id="ctl" checked><label for="ctl"><b>Controlled by Atlas</b></label><span class="rule flex-grow-1"></span></div>
            <div class="gbox gatlas">
              <div class="d-flex align-items-center"><input class="rd" type="radio" name="sc" id="r1" checked><label for="r1" class="flex-grow-1">Margin around feature</label>
                <div class="inp spin d-flex align-items-center"><input class="border-0 p-0 flex-grow-1" value="10%" aria-label="Margin"><svg width="13" height="11" viewBox="0 0 13 11"><path d="M0 5.500L4 0h9v11H4z" fill="#999"/><path d="M5 3l5 5M10 3L5 8" stroke="#fff" stroke-width="1.300"/></svg>
                  <div class="spinbtns d-flex flex-column ms-2"><button aria-label="Increase"><svg width="5" height="3" viewBox="0 0 5 3"><path d="M0 3h5L2.500 0z" fill="#3c5fa8"/></svg></button><button aria-label="Decrease"><svg width="5" height="3" viewBox="0 0 5 3"><path d="M0 0h5L2.500 3z" fill="#3c5fa8"/></svg></button></div></div>
                <svg class="ms-2" width="24" height="18"><use href="#ddef"/></svg></div>
              <div class="d-flex align-items-center"><input class="rd" type="radio" name="sc" id="r2"><label for="r2">Predefined scale (best fit)</label></div>
              <div class="d-flex align-items-center"><input class="rd" type="radio" name="sc" id="r3"><label for="r3">Fixed scale</label></div>
            </div>
            <div class="folds">
              <div class="fold d-flex align-items-center"><svg width="8" height="11"><use href="#tri"/></svg><b>Grids</b></div>
              <div class="fold d-flex align-items-center"><svg width="8" height="11"><use href="#tri"/></svg><b>Overviews</b></div>
              <div class="fold d-flex align-items-center"><svg width="8" height="11"><use href="#tri"/></svg><b>Position and Size</b></div>
              <div class="fold d-flex align-items-center"><svg width="8" height="11"><use href="#tri"/></svg><b>Rotation</b></div>
              <div class="fold d-flex align-items-start"><svg class="mt-1" width="8" height="11"><use href="#tri"/></svg><span class="d-flex gap-2 mt-1"><input class="ck" type="checkbox" id="frm"><label for="frm"><b>Frame</b></label></span></div>
            </div>
          </div>
          <div class="sbv d-flex flex-column pt-2 pb-1 flex-shrink-0" role="scrollbar" aria-valuenow="60">
            <svg width="7" height="4" viewBox="0 0 7 4"><path d="M0 4h7L3.500 0z" fill="#222"/></svg>
            <div style="flex:119"></div><div class="thumb" style="flex:77"><svg width="7" height="7" viewBox="0 0 7 7"><path d="M0 .5h7M0 3.500h7M0 6.500h7" stroke="#555"/></svg></div><div style="flex:100"></div>
            <svg width="7" height="4" viewBox="0 0 7 4"><path d="M0 0h7L3.500 4z" fill="#222"/></svg>
          </div>
        </div>
      </aside>
    </main>

    <footer class="status d-flex align-items-center justify-content-end flex-shrink-0">
      <span class="sx">x: -4.35818 mm</span><span class="sy">y: 207.885 mm</span><span class="sp">page: 1</span>
      <select class="zoomsel" aria-label="Zoom level"><option>60.7%</option></select>
      <input class="zslide ms-2" type="range" min="0" max="100" value="4" aria-label="Zoom">
      <svg class="ms-2 align-self-end" width="12" height="12" viewBox="0 0 12 12"><path d="M9 1h2v2H9zM5 5h2v2H5zM9 5h2v2H9zM1 9h2v2H1zM5 9h2v2H5zM9 9h2v2H9z" fill="#bbb"/></svg>
    </footer>
  </div>
</div>
<script src="https://cdn.jsdelivr.net/npm/bootstrap@5.3.0/dist/js/bootstrap.bundle.min.js"></script>
<script>
// Ruler ticks: one every 2 mm, medium at 10 mm, labelled at 20 mm.
(function () {
  const mm = 2.297, x0 = 29, y0 = 26;
  const rt = document.getElementById('rt'), rl = document.getElementById('rl');
  const tickLength = v => v % 20 === 0 ? 19 : v % 10 === 0 ? 7 : 4;
  function draw() {
    const w = rt.parentNode.clientWidth, h = rl.parentNode.clientHeight;
    let across = '', down = '';
    for (let v = -4; x0 + v * mm < w; v += 2) {
      const x = Math.round(x0 + v * mm) + .5;
      across += `<path d="M${x} ${19 - tickLength(v)}V19" stroke="#444"/>`;
      if (v % 20 === 0) across += `<text x="${x}" y="11">${v}</text>`;
    }
    for (let v = -10; y0 + v * mm < h; v += 2) {
      const y = Math.round(y0 + v * mm) + .5;
      down += `<path d="M${19 - tickLength(v)} ${y}H19" stroke="#444"/>`;
      if (v % 20 === 0) down += `<text transform="translate(11 ${y + 3}) rotate(-90)" text-anchor="end">${v}</text>`;
    }
    rt.innerHTML = across + '<path d="M20.500 0V19" stroke="red"/>';
    rl.innerHTML = down + '<path d="M0 503.500H19" stroke="red"/>';
  }
  draw();
  addEventListener('resize', draw);
})();
</script>
</body>
</html>
